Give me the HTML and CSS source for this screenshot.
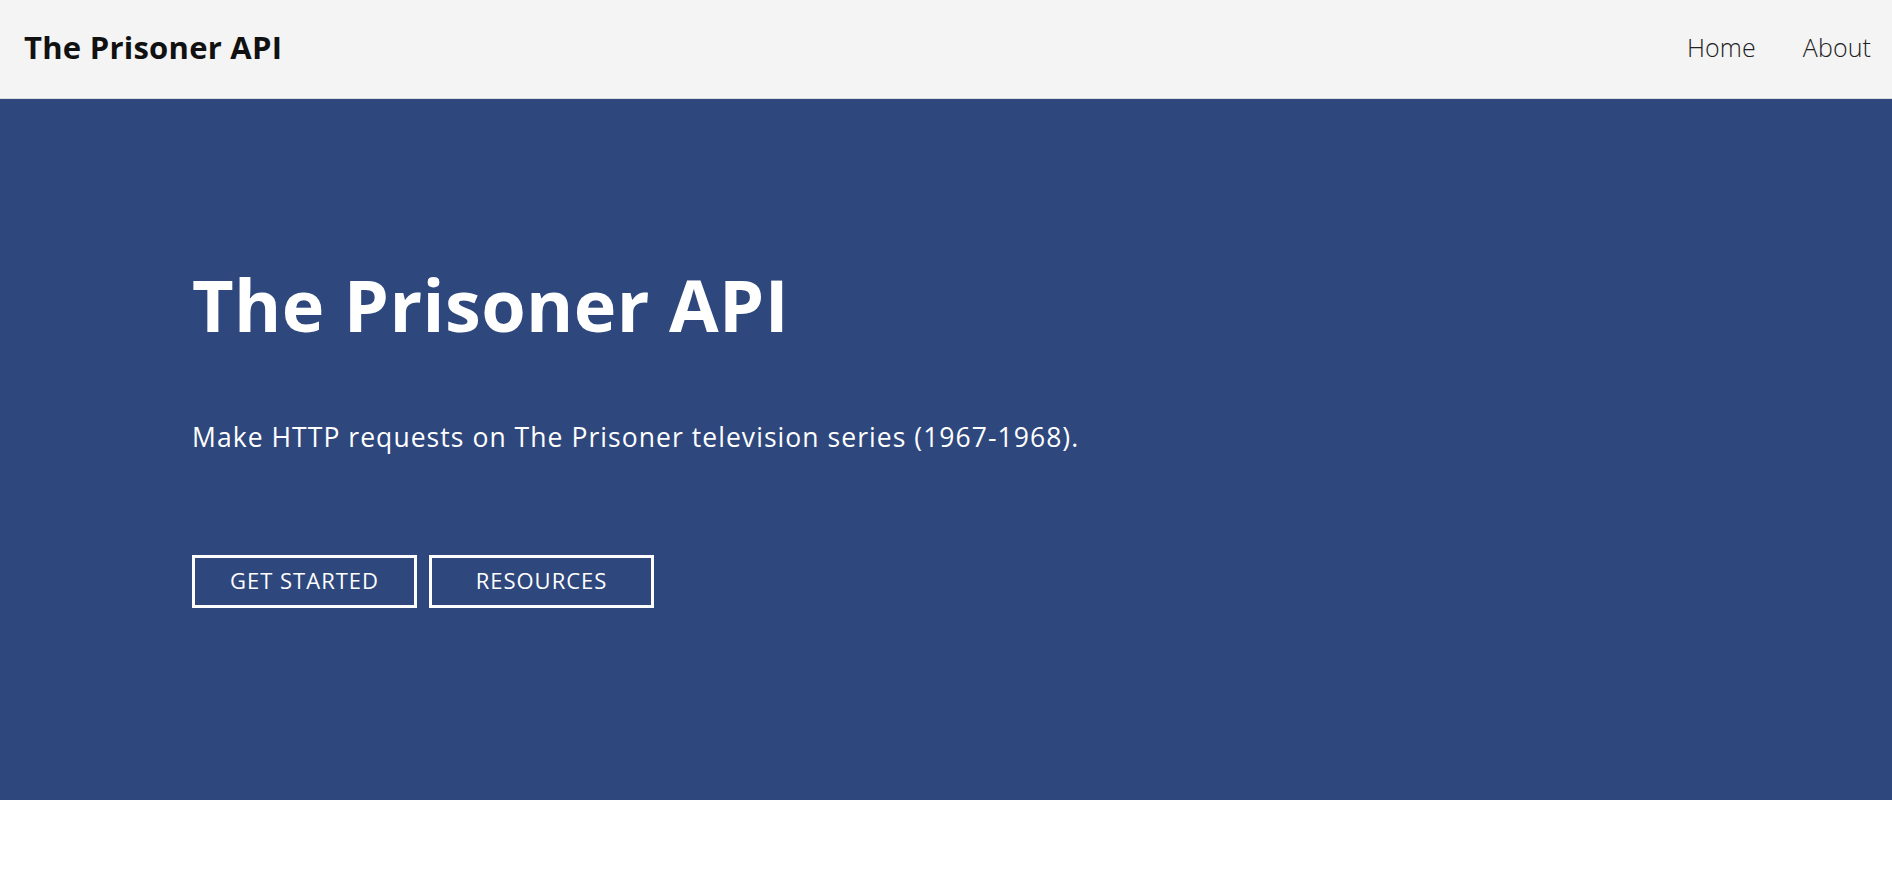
FILE: index.html
```html
<!DOCTYPE html>
<html lang="en">
<head>
<meta charset="utf-8">
<title>The Prisoner API</title>
<link rel="stylesheet" href="styles.css">
</head>
<body>
<header class="topbar">
  <a class="brand" href="#">The Prisoner API</a>
  <nav class="nav">
    <a class="nav-link" href="#">Home</a>
    <a class="nav-link" href="#">About</a>
  </nav>
</header>
<section class="hero">
  <h1 class="hero-title">The Prisoner API</h1>
  <p class="hero-sub">Make HTTP requests on The Prisoner television series (1967-1968).</p>
  <div class="hero-actions">
    <a class="btn" href="#">GET STARTED</a>
    <a class="btn" href="#">RESOURCES</a>
  </div>
</section>
</body>
</html>
```

FILE: styles.css
```css
* { box-sizing: border-box; }
html, body { margin: 0; padding: 0; }
body {
  font-family: "Open Sans", "Noto Sans", sans-serif;
  background: #ffffff;
  color: #111;
}
a { text-decoration: none; color: inherit; }

.topbar {
  height: 99px;
  background: #f4f4f4;
  border-bottom: 1px solid #dcdcdc;
  display: flex;
  align-items: center;
  justify-content: space-between;
  padding: 0 21px 4px 24px;
}
.brand {
  font-size: 31px;
  line-height: 1;
  font-weight: 700;
  color: #111;
  letter-spacing: 0.25px;
}
.nav {
  display: flex;
  gap: 47px;
}
.nav-link {
  font-size: 25px;
  line-height: 1;
  font-weight: 300;
  color: #222;
  letter-spacing: 0.1px;
}

.hero {
  height: 701px;
  background: #2e477d;
  padding: 169px 0 0 192px;
  color: #fff;
}
.hero-title {
  margin: 0;
  font-size: 72px;
  line-height: 1;
  font-weight: 700;
  letter-spacing: 0.4px;
}
.hero-sub {
  margin: 84px 0 0 0;
  font-size: 26.5px;
  line-height: 1;
  font-weight: 400;
  letter-spacing: 1.05px;
}
.hero-actions {
  margin-top: 104px;
  display: flex;
  gap: 12px;
}
.btn {
  width: 225px;
  height: 53px;
  border: 3px solid #fff;
  display: inline-flex;
  align-items: center;
  justify-content: center;
  padding-bottom: 2px;
  font-size: 22px;
  line-height: 1;
  color: #fff;
  letter-spacing: 1px;
}
```
